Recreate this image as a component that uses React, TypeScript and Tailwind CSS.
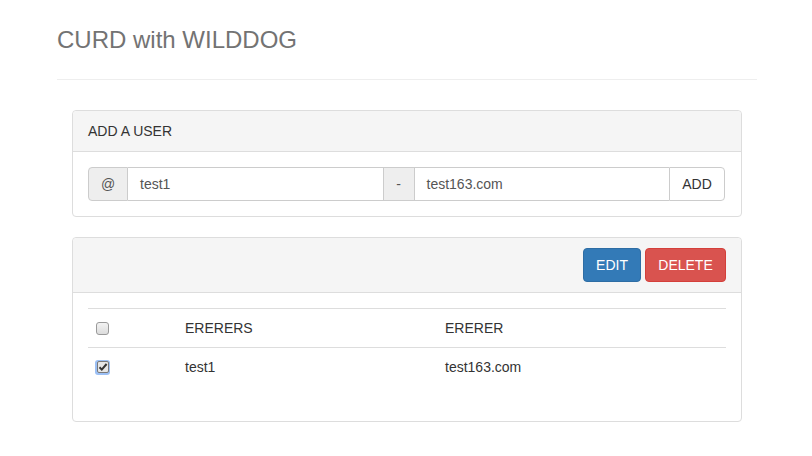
import React from "react";

function Check({ checked }: { checked?: boolean }) {
  if (checked) {
    return (
      <div className="w-[15px] h-[15px] rounded-[3px] bg-[#9cc0f5] flex items-center justify-center">
        <div className="w-[12px] h-[12px] rounded-[2px] border border-[#7a7a7a] bg-[#e6e6e6] flex items-center justify-center">
          <svg width="10" height="10" viewBox="0 0 10 10">
            <path d="M1.5 5.2 L3.8 7.6 L8.6 2" fill="none" stroke="#333" strokeWidth="2" />
          </svg>
        </div>
      </div>
    );
  }
  return (
    <div className="w-[13px] h-[13px] rounded-[3px] border border-[#9a9a9a] bg-[linear-gradient(#f3f3f3,#dcdcdc)]" />
  );
}

export default function App() {
  return (
    <div className="bg-white min-h-[456px] text-[#333] text-[14px] leading-[20px]" style={{ fontFamily: '"Liberation Sans", Arial, sans-serif' }}>
      <div className="pl-[57px]">
        <div className="w-[700px]">
          <div className="pt-[27px] pb-[26px] border-b border-[#eeeeee]">
            <h1 className="text-[24px] leading-[26px] text-[#737373] font-normal">CURD with WILDDOG</h1>
          </div>

          <div className="mx-[15px] mt-[30px] border border-[#dddddd] rounded-[4px]">
            <div className="bg-[#f5f5f5] border-b border-[#dddddd] px-[15px] py-[10px] rounded-t-[4px]">ADD A USER</div>
            <div className="pl-[15px] pr-[16px] py-[15px]">
              <div className="flex h-[34px]">
                <span className="w-[40px] flex items-center justify-center bg-[#eeeeee] border border-[#cccccc] rounded-l-[4px] text-[#555]">@</span>
                <div className="flex-1 flex items-center px-[12px] border-y border-[#cccccc] text-[#555]">test1</div>
                <span className="w-[32px] flex items-center justify-center bg-[#eeeeee] border border-[#cccccc] text-[#555]">-</span>
                <div className="flex-1 flex items-center px-[12px] border-y border-[#cccccc] text-[#555]">test163.com</div>
                <button className="w-[56px] flex items-center justify-center bg-white border border-[#cccccc] rounded-r-[4px] text-[#333]">ADD</button>
              </div>
            </div>
          </div>

          <div className="mx-[15px] mt-[20px] border border-[#dddddd] rounded-[4px]">
            <div className="bg-[#f5f5f5] border-b border-[#dddddd] px-[15px] py-[10px] rounded-t-[4px] flex justify-end gap-[4px]">
              <button className="h-[34px] w-[58px] bg-[#337ab7] border border-[#2e6da4] rounded-[4px] text-white">EDIT</button>
              <button className="h-[34px] w-[81px] bg-[#d9534f] border border-[#d43f3a] rounded-[4px] text-white">DELETE</button>
            </div>
            <div className="p-[15px] pb-[35px]">
              <div className="border-t border-[#dddddd]">
                <div className="flex h-[38px] items-center">
                  <div className="w-[89px] pl-[8px]"><Check /></div>
                  <div className="w-[260px] px-[8px]">ERERERS</div>
                  <div className="flex-1 px-[8px]">ERERER</div>
                </div>
                <div className="flex h-[39px] items-center border-t border-[#dddddd]">
                  <div className="w-[89px] pl-[7px]"><Check checked /></div>
                  <div className="w-[260px] px-[8px]">test1</div>
                  <div className="flex-1 px-[8px]">test163.com</div>
                </div>
              </div>
            </div>
          </div>
        </div>
      </div>
    </div>
  );
}
